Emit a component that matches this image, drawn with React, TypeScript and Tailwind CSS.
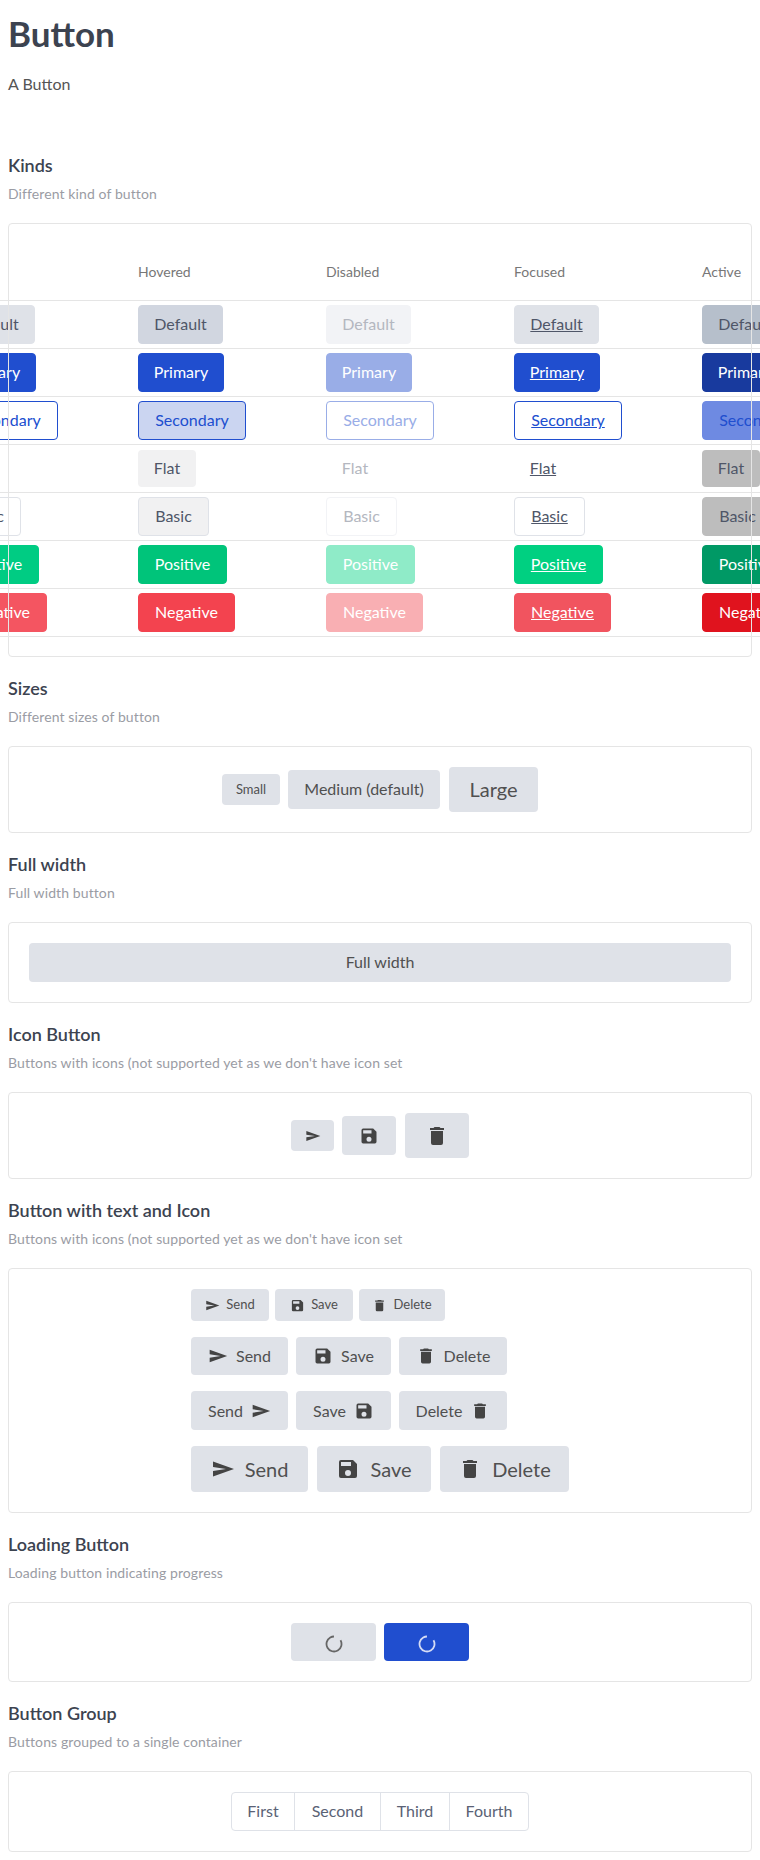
import type { ReactNode } from 'react'

const FONT = "font-['Lato','Open_Sans',sans-serif]"

type Kind = 'default' | 'primary' | 'secondary' | 'flat' | 'basic' | 'positive' | 'negative'
type State = 'normal' | 'hovered' | 'disabled' | 'focused' | 'active'

const KINDS: { kind: Kind; label: string; width: string }[] = [
  { kind: 'default', label: 'Default', width: 'w-[85px]' },
  { kind: 'primary', label: 'Primary', width: 'w-[86px]' },
  { kind: 'secondary', label: 'Secondary', width: 'w-[108px]' },
  { kind: 'flat', label: 'Flat', width: 'w-[58px]' },
  { kind: 'basic', label: 'Basic', width: 'w-[71px]' },
  { kind: 'positive', label: 'Positive', width: 'w-[89px]' },
  { kind: 'negative', label: 'Negative', width: 'w-[97px]' },
]

const STATES: { state: State; label: string }[] = [
  { state: 'normal', label: '' },
  { state: 'hovered', label: 'Hovered' },
  { state: 'disabled', label: 'Disabled' },
  { state: 'focused', label: 'Focused' },
  { state: 'active', label: 'Active' },
]

const STYLES: Record<Kind, Record<State, string>> = {
  default: {
    normal: 'bg-[#dfe2e8] border-[#dfe2e8] text-[#4f5668]',
    hovered: 'bg-[#d1d6e0] border-[#d1d6e0] text-[#4f5668]',
    disabled: 'bg-[#f2f3f6] border-[#f2f3f6] text-[#b4b7c0]',
    focused: 'bg-[#dfe2e8] border-[#dfe2e8] text-[#4f5668] underline',
    active: 'bg-[#b6bfcb] border-[#b6bfcb] text-[#4f5668]',
  },
  primary: {
    normal: 'bg-[#204ecf] border-[#204ecf] text-white',
    hovered: 'bg-[#204ecf] border-[#204ecf] text-white',
    disabled: 'bg-[#99ade7] border-[#99ade7] text-white',
    focused: 'bg-[#204ecf] border-[#204ecf] text-white underline',
    active: 'bg-[#183a9e] border-[#183a9e] text-white',
  },
  secondary: {
    normal: 'bg-white border-[#204ecf] text-[#204ecf]',
    hovered: 'bg-[#cbd5f1] border-[#204ecf] text-[#204ecf]',
    disabled: 'bg-white border-[#99ade7] text-[#99ade7]',
    focused: 'bg-white border-[#204ecf] text-[#204ecf] underline',
    active: 'bg-[#6e8ae2] border-[#6e8ae2] text-[#204ecf]',
  },
  flat: {
    normal: 'bg-transparent text-[#4f5668]',
    hovered: 'bg-[#f1f1f2] text-[#4f5668]',
    disabled: 'bg-transparent text-[#b4b7c0]',
    focused: 'bg-transparent text-[#4f5668] underline',
    active: 'bg-[#bdbdbd] text-[#4f5668]',
  },
  basic: {
    normal: 'bg-white border-[#dfe2e8] text-[#4f5668]',
    hovered: 'bg-[#f1f1f2] border-[#dfe2e8] text-[#4f5668]',
    disabled: 'bg-white border-[#f2f3f6] text-[#b4b7c0]',
    focused: 'bg-white border-[#dfe2e8] text-[#4f5668] underline',
    active: 'bg-[#bdbdbd] border-[#bdbdbd] text-[#4f5668]',
  },
  positive: {
    normal: 'bg-[#00cc83] border-[#00cc83] text-white',
    hovered: 'bg-[#00c47a] border-[#00c47a] text-white',
    disabled: 'bg-[#8febc8] border-[#8febc8] text-white',
    focused: 'bg-[#00d081] border-[#00d081] text-white underline',
    active: 'bg-[#009965] border-[#009965] text-white',
  },
  negative: {
    normal: 'bg-[#f45561] border-[#f45561] text-white',
    hovered: 'bg-[#f3434f] border-[#f3434f] text-white',
    disabled: 'bg-[#f9afb3] border-[#f9afb3] text-white',
    focused: 'bg-[#f1545f] border-[#f1545f] text-white underline',
    active: 'bg-[#e0131e] border-[#e0131e] text-white',
  },
}

function SendIcon({ size }: { size: number }) {
  return (
    <svg width={size} height={size} viewBox="0 0 24 24" fill="#444" aria-hidden="true">
      <path d="M2 19.5L23 12 2 4.5V10l13 2-13 2z" />
    </svg>
  )
}

function SaveIcon({ size }: { size: number }) {
  return (
    <svg width={size} height={size} viewBox="0 0 24 24" fill="#444" aria-hidden="true">
      <path d="M17 3H5a2 2 0 0 0-2 2v14a2 2 0 0 0 2 2h14a2 2 0 0 0 2-2V7l-4-4zm-5 16a3 3 0 1 1 0-6 3 3 0 0 1 0 6zm3-10H5V5h10v4z" />
    </svg>
  )
}

function TrashIcon({ size }: { size: number }) {
  return (
    <svg width={size} height={size} viewBox="0 0 24 24" fill="#444" aria-hidden="true">
      <path d="M6 19a2 2 0 0 0 2 2h8a2 2 0 0 0 2-2V7H6v12zM19 4h-3.5l-1-1h-5l-1 1H5v2h14V4z" />
    </svg>
  )
}

// Ring with a gap between 12 and 2 o'clock
function Spinner({ color }: { color: string }) {
  return (
    <svg width="18" height="18" viewBox="0 0 18 18" fill="none" className="mt-1" aria-hidden="true">
      <circle
        cx="9"
        cy="9"
        r="7.5"
        stroke={color}
        strokeWidth="1.8"
        strokeDasharray="39 8.1"
        transform="rotate(-30 9 9)"
      />
    </svg>
  )
}

const TEXT_ICON = [
  { label: 'Send', Icon: SendIcon },
  { label: 'Save', Icon: SaveIcon },
  { label: 'Delete', Icon: TrashIcon },
]

function Heading({ title, sub }: { title: string; sub: string }) {
  return (
    <>
      <h2 className="text-lg font-semibold leading-[24px] text-[#3c4350]">{title}</h2>
      <p className="mt-[7px] text-sm leading-[20px] tracking-[0.1px] text-[#9a9ca4]">{sub}</p>
    </>
  )
}

function Section({ title, sub, children }: { title: string; sub: string; children: ReactNode }) {
  return (
    <section className="mt-[19px]">
      <Heading title={title} sub={sub} />
      <div className="mt-[19px] rounded border border-[#e5e5e5] p-5">{children}</div>
    </section>
  )
}

function Row({ children, className = '' }: { children: ReactNode; className?: string }) {
  return <div className={`flex items-center justify-center ${className}`}>{children}</div>
}

const greyBtn = 'flex items-center justify-center rounded bg-[#dfe2e8] text-[#505050]'

export default function App() {
  return (
    <div className={`${FONT} h-[1860px] w-[760px] overflow-hidden bg-white px-2`}>
      <h1 className="pt-[10px] text-[35px] font-bold leading-[46px] text-[#3c4350]">Button</h1>
      <p className="mt-[16px] text-base leading-[24px] text-[#555]">A Button</p>

      <section className="mt-[57px]">
        <Heading title="Kinds" sub="Different kind of button" />
        <div className="relative mt-[19px] flex h-[434px] justify-center">
          <div className="w-[1020px] shrink-0 pt-[24px]">
            <div className="flex h-[53px] items-center pb-[3px] pl-[80px]">
              {STATES.map((s) => (
                <div key={s.state} className="w-[188px] shrink-0 text-sm text-[#777]">
                  {s.label}
                </div>
              ))}
            </div>
            <div className="border-b border-[#e5e5e5]">
              {KINDS.map((k) => (
                <div key={k.kind} className="flex h-12 items-center border-t border-[#e5e5e5] pl-[80px]">
                  {STATES.map((s) => (
                    <div key={s.state} className="w-[188px] shrink-0">
                      <button
                        type="button"
                        className={`block rounded pb-[2px] text-base leading-[24px] ${k.width} ${
                          k.kind === 'flat' ? 'h-[37px]' : 'h-[39px] border'
                        } ${STYLES[k.kind][s.state]}`}
                      >
                        {k.label}
                      </button>
                    </div>
                  ))}
                </div>
              ))}
            </div>
          </div>
          <div className="pointer-events-none absolute inset-0 rounded border border-[#e5e5e5]" />
        </div>
      </section>

      <Section title="Sizes" sub="Different sizes of button">
        <Row className="gap-2">
          <button type="button" className={`${greyBtn} h-[31px] w-[58px] text-[13px]`}>Small</button>
          <button type="button" className={`${greyBtn} h-[39px] w-[152px] pb-[2px] text-base`}>Medium (default)</button>
          <button type="button" className={`${greyBtn} ml-px h-[45px] w-[89px] pb-[2px] text-[20px]`}>Large</button>
        </Row>
      </Section>

      <Section title="Full width" sub="Full width button">
        <button type="button" className={`${greyBtn} h-[39px] w-full pb-[2px] text-base`}>Full width</button>
      </Section>

      <Section title="Icon Button" sub="Buttons with icons (not supported yet as we don't have icon set">
        <Row className="gap-2">
          <button type="button" className={`${greyBtn} h-[31px] w-[43px]`}><SendIcon size={16} /></button>
          <button type="button" className={`${greyBtn} h-[39px] w-[54px]`}><SaveIcon size={20} /></button>
          <button type="button" className={`${greyBtn} ml-px h-[45px] w-[64px]`}><TrashIcon size={24} /></button>
        </Row>
      </Section>

      <Section title="Button with text and Icon" sub="Buttons with icons (not supported yet as we don't have icon set">
        <div className="mx-auto flex w-fit flex-col gap-4">
          <div className="flex gap-[6px]">
            {TEXT_ICON.map(({ label, Icon }, i) => (
              <button key={label} type="button" className={`${greyBtn} h-[32px] gap-[6px] text-[13px] ${i === 2 ? 'w-[86px]' : 'w-[78px]'}`}>
                <Icon size={15} />{label}
              </button>
            ))}
          </div>
          <div className="flex gap-2">
            {TEXT_ICON.map(({ label, Icon }, i) => (
              <button key={label} type="button" className={`${greyBtn} h-[38px] gap-[8px] text-base ${['w-[97px]', 'w-[95px]', 'w-[108px]'][i]}`}>
                <Icon size={20} />{label}
              </button>
            ))}
          </div>
          <div className="flex gap-2">
            {TEXT_ICON.map(({ label, Icon }, i) => (
              <button key={label} type="button" className={`${greyBtn} h-[39px] gap-[8px] text-base ${['w-[97px]', 'w-[95px]', 'w-[108px]'][i]}`}>
                {label}<Icon size={20} />
              </button>
            ))}
          </div>
          <div className="flex gap-[9px]">
            {TEXT_ICON.map(({ label, Icon }, i) => (
              <button key={label} type="button" className={`${greyBtn} h-[46px] gap-[10px] text-[20px] ${['w-[117px]', 'w-[114px]', 'w-[129px]'][i]}`}>
                <Icon size={24} />{label}
              </button>
            ))}
          </div>
        </div>
      </Section>

      <Section title="Loading Button" sub="Loading button indicating progress">
        <Row className="gap-2">
          <button type="button" className={`${greyBtn} h-[38px] w-[85px]`}>
            <Spinner color="#666" />
          </button>
          <button type="button" className="flex h-[38px] w-[85px] items-center justify-center rounded bg-[#204ecf]">
            <Spinner color="#d5dcf5" />
          </button>
        </Row>
      </Section>

      <Section title="Button Group" sub="Buttons grouped to a single container">
        <Row>
          <div className="flex h-[39px] rounded border border-[#dfe2e8] text-base text-[#5a6275]">
            {['First', 'Second', 'Third', 'Fourth'].map((t, i) => (
              <button
                key={t}
                type="button"
                className={`pb-[2px] ${['w-[62px]', 'w-[86px]', 'w-[69px]', 'w-[79px]'][i]} ${i > 0 ? 'border-l border-[#dfe2e8]' : ''}`}
              >
                {t}
              </button>
            ))}
          </div>
        </Row>
      </Section>
    </div>
  )
}
